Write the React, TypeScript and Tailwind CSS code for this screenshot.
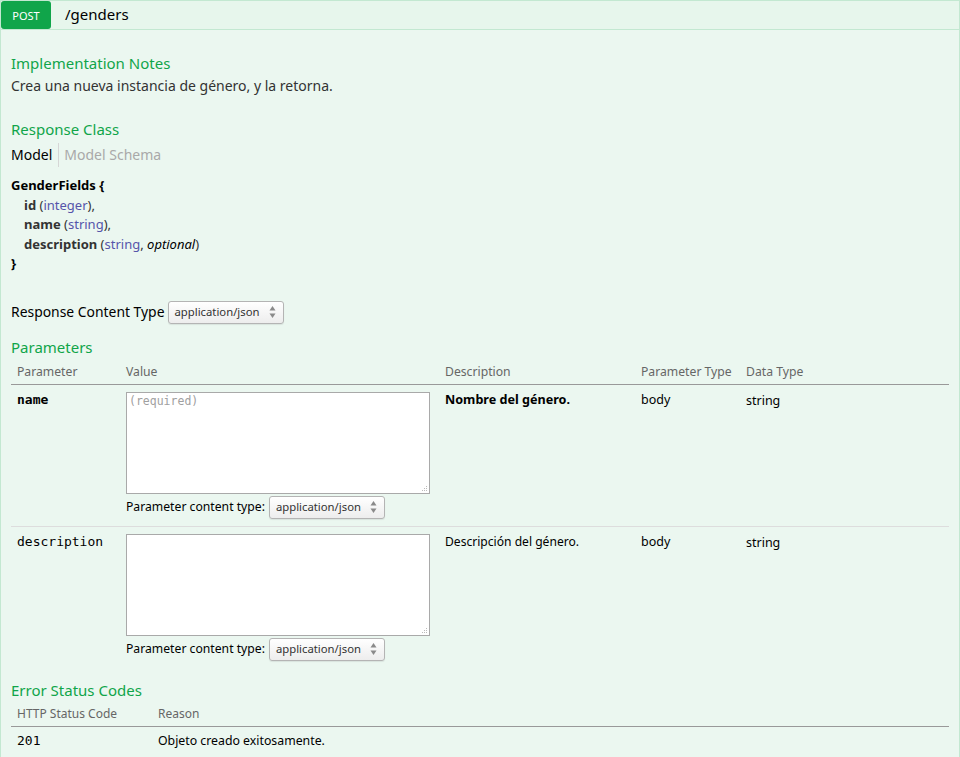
import React from "react";

const sans = { fontFamily: '"Noto Sans", "Open Sans", sans-serif' };

function Arrows() {
  return (
    <svg width="7" height="14" viewBox="0 0 7 14" className="shrink-0">
      <path d="M3.5 1 L6.5 5.5 L0.5 5.5 Z" fill="#8a8a8a" />
      <path d="M3.5 13 L6.5 8.5 L0.5 8.5 Z" fill="#8a8a8a" />
    </svg>
  );
}

function Select() {
  return (
    <div className="inline-flex items-center h-[23px] w-[116px] border border-[#b4b4b4] rounded-[3px] bg-gradient-to-b from-white to-[#ededed] pl-[6px] pr-[7px] text-[11.3px] text-[#333] shadow-[0_1px_1px_rgba(0,0,0,0.08)]">
      <span className="flex-1 leading-[16px]">application/json</span>
      <Arrows />
    </div>
  );
}

function Heading({ children, className = "" }: { children: React.ReactNode; className?: string }) {
  return <h4 className={"text-[15px] leading-[22px] text-[#10a54a] font-normal " + className}>{children}</h4>;
}

function ParamRow({ name, bold, desc, required, border }: { name: string; bold: boolean; desc: string; required: boolean; border: boolean }) {
  return (
    <div className={"grid grid-cols-[109px_319px_196px_105px_1fr] " + (border ? "border-b border-[#dddddd]" : "")}>
      <div className={"pl-[6px] pt-[7px] font-['DejaVu_Sans_Mono',monospace] text-[13px] leading-[16px] text-black " + (bold ? "font-bold" : "")}>
        {name}
      </div>
      <div className="pl-[6px] pt-[7px] pb-[7px]">
        <div className="w-[304px] h-[102px] bg-white border border-[#a9a9a9] relative">
          {required && (
            <span className="absolute left-[2px] top-[0px] font-['DejaVu_Sans_Mono',monospace] text-[11.5px] leading-[16px] text-[#a0a0a0]">(required)</span>
          )}
          <svg width="6" height="6" viewBox="0 0 6 6" className="absolute right-[1px] bottom-[1px]">
            <rect x="4" y="0" width="1" height="1" fill="#bbb" />
            <rect x="2" y="2" width="1" height="1" fill="#bbb" />
            <rect x="4" y="2" width="1" height="1" fill="#bbb" />
            <rect x="0" y="4" width="1" height="1" fill="#bbb" />
            <rect x="2" y="4" width="1" height="1" fill="#bbb" />
            <rect x="4" y="4" width="1" height="1" fill="#bbb" />
          </svg>
        </div>
        <div className="mt-[2px] flex items-center gap-[4px]">
          <span className="text-[12.2px] text-black leading-[16px]">Parameter content type:</span>
          <Select />
        </div>
      </div>
      <div className={"pl-[6px] pt-[7px] leading-[16px] text-black " + (bold ? "font-bold text-[12.6px]" : "text-[12.1px]")}>{desc}</div>
      <div className="pl-[6px] pt-[7px] text-[12.5px] leading-[16px] text-black">body</div>
      <div className="pl-[6px] pt-[8px] text-[12.5px] leading-[16px] text-black">string</div>
    </div>
  );
}

export default function App() {
  return (
    <div style={sans} className="w-[960px] h-[757px] overflow-hidden bg-white">
      {/* heading bar */}
      <div className="h-[30px] bg-[#e7f6ec] border border-[#c3e8d1] flex items-stretch">
        <div className="w-[50px] bg-[#10a54a] rounded-[3px] flex items-center justify-center text-white text-[11px] leading-none pt-[1px]">
          POST
        </div>
        <div className="pl-[14px] flex items-center text-[15px] text-black leading-none pb-[1px]">/genders</div>
      </div>
      {/* content */}
      <div className="bg-[#ebf7f0] border-x border-[#c3e8d1] pl-[10px] pr-[10px] pt-[22px] h-[727px]">
        <Heading className="mb-[2px]">Implementation Notes</Heading>
        <p className="text-[14px] leading-[20px] text-[#333]">Crea una nueva instancia de género, y la retorna.</p>

        <Heading className="mt-[22px]">Response Class</Heading>
        <div className="mt-[3px] flex items-stretch text-[14px] leading-[20px]">
          <span className="text-black pr-[6px] py-[2px] border-r border-[#d6d6d6]">Model</span>
          <span className="text-[#a9a9a9] pl-[5px] py-[2px]">Model Schema</span>
        </div>

        <div className="mt-[9px] text-[13px] leading-[19.5px] text-[#333]">
          <div className="font-bold text-black">GenderFields {"{"}</div>
          <div className="pl-[13px]">
            <span className="font-bold">id</span> (<span className="text-[#55a]">integer</span>),
          </div>
          <div className="pl-[13px]">
            <span className="font-bold">name</span> (<span className="text-[#55a]">string</span>),
          </div>
          <div className="pl-[13px]">
            <span className="font-bold">description</span> (<span className="text-[#55a]">string</span>, <span className="italic text-black">optional</span>)
          </div>
          <div className="font-bold text-black">{"}"}</div>
        </div>

        <div className="mt-[27px] flex items-center gap-[3px]">
          <span className="text-[13.9px] leading-[20px] text-black">Response Content Type</span>
          <Select />
        </div>

        <Heading className="mt-[12px]">Parameters</Heading>
        <div className="grid grid-cols-[109px_319px_196px_105px_1fr] border-b border-[#999] pt-[5px] pb-[3px] text-[12.2px] leading-[18px] text-[#666]">
          <div className="pl-[6px]">Parameter</div>
          <div className="pl-[6px]">Value</div>
          <div className="pl-[6px]">Description</div>
          <div className="pl-[6px]">Parameter Type</div>
          <div className="pl-[6px]">Data Type</div>
        </div>
        <ParamRow name="name" bold desc="Nombre del género." required border />
        <ParamRow name="description" bold={false} desc="Descripción del género." required={false} border={false} />

        <Heading className="mt-[11px]">Error Status Codes</Heading>
        <div className="grid grid-cols-[141px_1fr] border-b border-[#999] pt-[4px] pb-[3px] text-[12px] leading-[18px] text-[#666]">
          <div className="pl-[6px]">HTTP Status Code</div>
          <div className="pl-[6px]">Reason</div>
        </div>
        <div className="grid grid-cols-[141px_1fr] pt-[6px]">
          <div className="pl-[6px] font-['DejaVu_Sans_Mono',monospace] text-[13px] leading-[16px] text-black">201</div>
          <div className="pl-[6px] text-[12.3px] leading-[16px] text-black">Objeto creado exitosamente.</div>
        </div>
      </div>
    </div>
  );
}
